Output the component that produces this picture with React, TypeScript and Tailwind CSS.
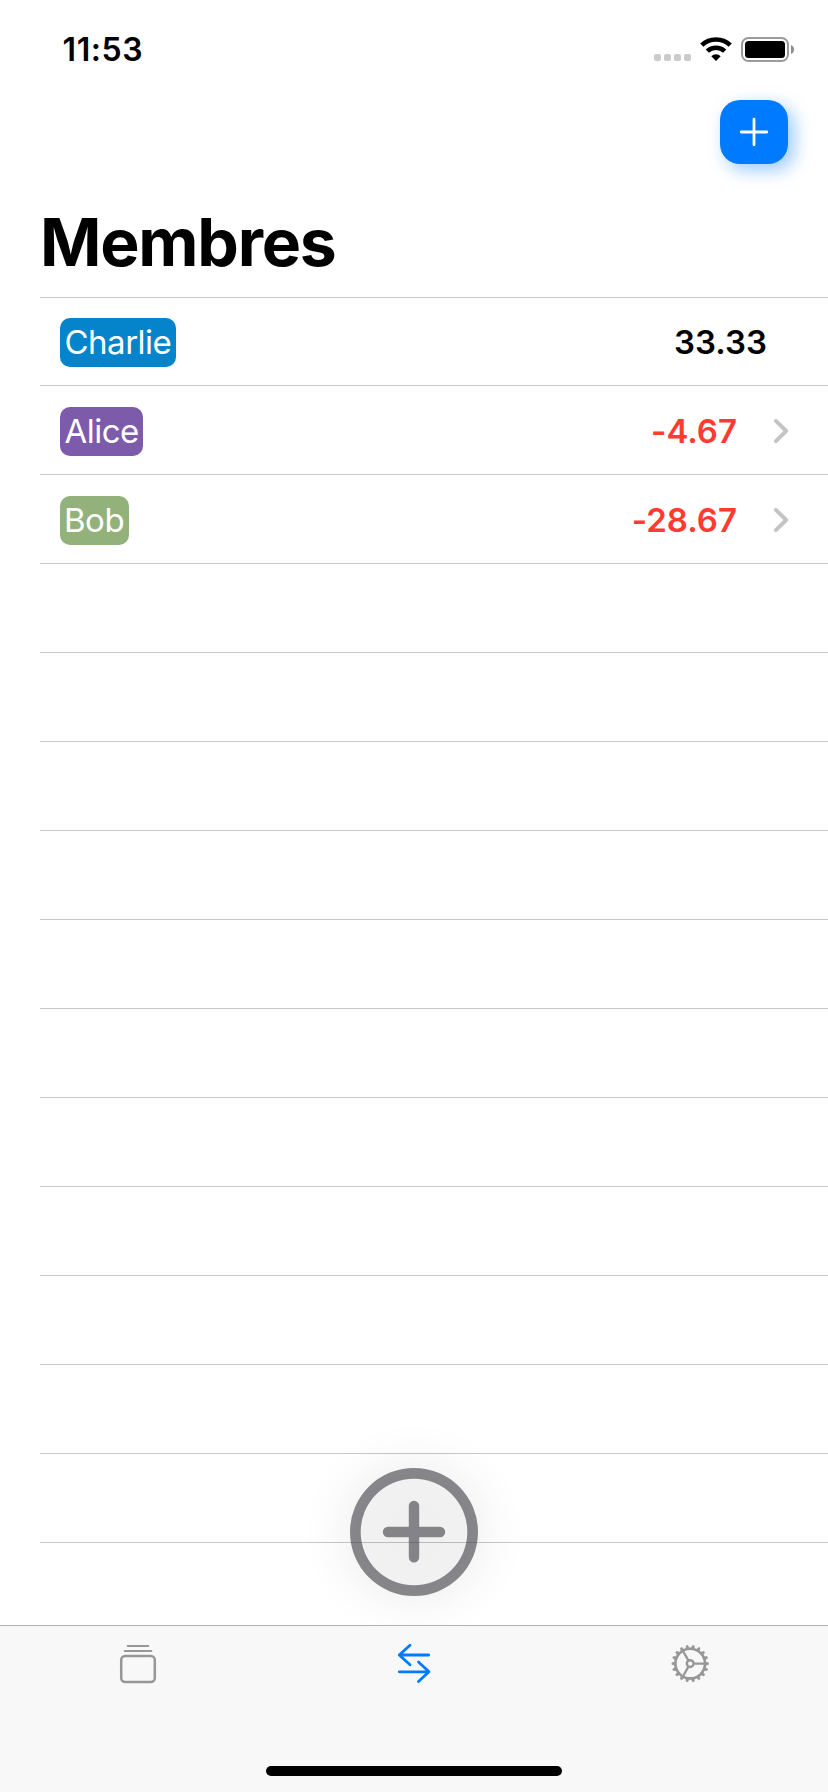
import React from "react";

type Member = {
  name: string;
  balance: string;
  badge: string;
  row: string;
  tone: string;
  link: boolean;
};

const members: Member[] = [
  { name: "Charlie", balance: "33.33", badge: "w-[116px] bg-[#0584cb] pl-[4.5px] tracking-[-0.5px]", row: "h-[88px]", tone: "text-black mr-[61px]", link: false },
  { name: "Alice", balance: "-4.67", badge: "w-[83px] bg-[#7d5bab] pl-[4.5px] tracking-[-0.5px]", row: "h-[89px]", tone: "text-[#ff3b30]", link: true },
  { name: "Bob", balance: "-28.67", badge: "w-[69px] bg-[#93b17b] pl-[4px] tracking-[-0.5px]", row: "h-[89px]", tone: "text-[#ff3b30]", link: true },
];

const emptyRows = Array.from({ length: 11 }, (_, i) => i);
const teeth = Array.from({ length: 18 }, (_, i) => i * 20);

function StatusBar() {
  return (
    <div className="flex h-[100px] items-start justify-between pl-[62.5px] pr-[33px]">
      <span className="mt-[30px] text-[32px] leading-[40px] font-semibold tracking-[0.6px]">11:53</span>
      <div className="mt-[36px] flex items-start">
        <div className="mt-[18px] flex gap-[3px]">
          {[0, 1, 2, 3].map((i) => (
            <span key={i} className="size-[7px] rounded-[2px] bg-[#cbcbcb]" />
          ))}
        </div>
        <svg className="ml-[9px]" width="32" height="26" viewBox="0 0 32 26">
          <g fill="none" stroke="#000" strokeWidth="4.6">
            <path d="M1.8 9.2a20.5 20.5 0 0 1 28.4 0" />
            <path d="M7.3 15.2a12.5 12.5 0 0 1 17.4 0" />
          </g>
          <path d="M11.3 20.3a6.7 6.7 0 0 1 9.4 0L16 25z" fill="#000" />
        </svg>
        <svg className="ml-[9px]" width="54" height="27" viewBox="0 0 54 27">
          <rect x="1" y="2" width="46" height="23" rx="6.5" fill="none" stroke="#9b9b9b" strokeWidth="2" />
          <rect x="4" y="5" width="40" height="17" rx="3.5" fill="#000" />
          <path d="M50 9c4 1.6 4 7.4 0 9z" fill="#8c8c8c" />
        </svg>
      </div>
    </div>
  );
}

function MemberRow({ member }: { member: Member }) {
  return (
    <li className={`flex items-start justify-between border-b border-[#c6c6c8] pl-[20px] ${member.row}`}>
      <span
        className={`${member.link ? "mt-[21px]" : "mt-[20px]"} flex h-[49px] rounded-[10px] text-[33px] leading-[49px] text-white ${member.badge}`}
      >
        {member.name}
      </span>
      <div className={`${member.link ? "mt-[21px]" : "mt-[20px]"} flex h-[49px] items-start`}>
        <span className={`text-[33px] leading-[49px] font-semibold [font-feature-settings:'calt'_0] ${member.tone}`}>
          {member.balance}
        </span>
        {member.link && (
          <svg className="mt-[11px] mr-[38px] ml-[35px]" width="18" height="26" viewBox="0 0 18 26">
            <path d="M3.9 2.8 14.2 13 3.9 23.2" fill="none" stroke="#c4c4c7" strokeWidth="3.9" strokeLinecap="round" strokeLinejoin="round" />
          </svg>
        )}
      </div>
    </li>
  );
}

function TabBar() {
  return (
    <nav className="flex h-[167px] flex-col justify-between border-t border-[#b2b2b2] bg-[#f8f8f8]">
      <div className="grid grid-cols-3 justify-items-center pt-[14px]">
        <svg width="48" height="48" viewBox="114 1640 48 48" fill="none" stroke="#979797">
          <path d="M127.8 1646h20.4M124.8 1651h26.4" strokeWidth="2.2" strokeLinecap="round" />
          <rect x="121.2" y="1656" width="33.6" height="26" rx="4" strokeWidth="2.5" />
        </svg>
        <svg width="48" height="48" viewBox="390 1640 48 48" fill="none" stroke="#007aff" strokeWidth="2.8" strokeLinecap="round" strokeLinejoin="round">
          <path d="M410 1645.2 399.3 1655 410 1664.7M399.3 1655H428.7" />
          <path d="M418.5 1662 429 1671.8 418.5 1681.6M429 1671.8H399.3" />
        </svg>
        <svg width="48" height="48" viewBox="-24.2 -23.6 48 48" fill="none" stroke="#979797">
          <circle r="14.8" strokeWidth="2.6" />
          <circle r="3.4" strokeWidth="2.4" />
          <path d="M4 0H14.5M-2 3.5-7.2 12.6M-2-3.5-7.2-12.6" strokeWidth="2.3" />
          {teeth.map((angle) => (
            <path key={angle} d="M15.5-1.6 18.3-.8V.8L15.5 1.6z" fill="#979797" strokeWidth=".6" transform={`rotate(${angle})`} />
          ))}
        </svg>
      </div>
      <div className="mb-[16px] h-[10px] w-[296px] self-center rounded-full bg-black" />
    </nav>
  );
}

export default function App() {
  return (
    <div className="relative flex h-[1792px] w-[828px] flex-col overflow-hidden bg-white font-['Inter','Liberation_Sans',sans-serif] text-black">
      <StatusBar />
      <header className="flex h-[197px] flex-col pl-[40px]">
        <button
          aria-label="Ajouter"
          className="mr-[40px] flex h-[64px] w-[68px] items-center justify-center self-end rounded-[20px] bg-[#007aff] shadow-[6px_6px_18px_rgba(0,122,255,0.4)]"
        >
          <svg width="30" height="30" viewBox="0 0 30 30">
            <path d="M15 2.2v25.6M2.2 15h25.6" stroke="#fff" strokeWidth="2.8" strokeLinecap="round" />
          </svg>
        </button>
        <h1 className="mt-[38px] text-[66px] leading-[80px] font-bold tracking-[-1.25px]">Membres</h1>
      </header>
      <ul className="ml-[40px] flex-1 border-t border-[#c6c6c8]">
        {members.map((m) => (
          <MemberRow key={m.name} member={m} />
        ))}
        {emptyRows.map((i) => (
          <li key={i} className="h-[89px] border-b border-[#c6c6c8]" />
        ))}
      </ul>
      <TabBar />
      <button aria-label="Nouveau" className="absolute top-[1412px] left-[294px] size-[240px]">
        <svg width="240" height="240" viewBox="-120 -120 240 240">
          <defs>
            <radialGradient id="halo" gradientUnits="userSpaceOnUse" cx="0" cy="0" r="112">
              <stop offset="0" stopColor="#000" stopOpacity=".06" />
              <stop offset=".45" stopColor="#000" stopOpacity=".055" />
              <stop offset=".6" stopColor="#000" stopOpacity=".032" />
              <stop offset=".75" stopColor="#000" stopOpacity=".014" />
              <stop offset=".9" stopColor="#000" stopOpacity=".004" />
              <stop offset="1" stopColor="#000" stopOpacity="0" />
            </radialGradient>
          </defs>
          <path d="M-120-120H120V93H-120z" fill="url(#halo)" />
          <path
            d="M0-64A64 64 0 1 1 0 64A64 64 0 1 1 0-64ZM0-53.3A53.3 53.3 0 1 0 0 53.3A53.3 53.3 0 1 0 0-53.3ZM-5.2-26a5.2 5.2 0 0 1 10.4 0V-5.2H26a5.2 5.2 0 0 1 0 10.4H5.2V25.2a5.2 5.2 0 0 1-10.4 0V5.2H-26a5.2 5.2 0 0 1 0-10.4H-5.2Z"
            fill="#3c3c43"
            fillOpacity=".6"
          />
        </svg>
      </button>
    </div>
  );
}
